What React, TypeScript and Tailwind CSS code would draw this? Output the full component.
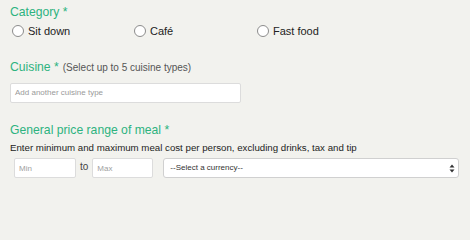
import React from 'react';

const green = 'text-[#2db37f]';

const Radio = ({ label, className }: { label: string; className: string }) => (
  <label className={`flex items-center gap-[4px] ${className}`}>
    <span className="w-[12px] h-[12px] rounded-full border border-[#8c8c8c] bg-white shrink-0" />
    <span className="text-[11px] leading-[12px] text-[#222]">{label}</span>
  </label>
);

export default function App() {
  return (
    <div className="min-h-screen w-full bg-[#f2f2ee]">
      <div className="w-[470px] h-[201px] font-['Liberation_Sans',Arial,sans-serif] px-[10px] pt-[5px] overflow-hidden">
        {/* Category */}
        <div className={`text-[12.2px] leading-[14px] ${green}`}>Category *</div>
        <div className="flex mt-[6px] pl-[2px]">
          <Radio label="Sit down" className="w-[122px]" />
          <Radio label="Café" className="w-[123px]" />
          <Radio label="Fast food" className="w-[120px]" />
        </div>

        {/* Cuisine */}
        <div className="flex items-baseline mt-[23px]">
          <span className={`text-[12.2px] leading-[14px] ${green}`}>Cuisine *</span>
          <span className="ml-[4px] text-[10px] text-[#555]">(Select up to 5 cuisine types)</span>
        </div>
        <div className="mt-[8px] w-[231px] h-[20px] bg-white border border-[#dcdcdc] rounded-[2px] flex items-center px-[4px]">
          <span className="text-[8px] text-[#9a9a9a]">Add another cuisine type</span>
        </div>

        {/* Price range */}
        <div className={`mt-[20px] text-[12.2px] leading-[14px] ${green}`}>General price range of meal *</div>
        <div className="mt-[5px] text-[9.7px] leading-[12px] text-[#222]">
          Enter minimum and maximum meal cost per person, excluding drinks, tax and tip
        </div>
        <div className="flex items-center mt-[4px] pl-[4px]">
          <div className="w-[62px] h-[20px] bg-white border border-[#dcdcdc] rounded-[2px] flex items-center px-[4px] pt-[2px]">
            <span className="text-[8px] text-[#a0a0a0]">Min</span>
          </div>
          <span className="mx-[4px] text-[10px] text-[#444] -mt-[4px]">to</span>
          <div className="w-[61px] h-[20px] bg-white border border-[#dcdcdc] rounded-[2px] flex items-center px-[4px] pt-[2px]">
            <span className="text-[8px] text-[#a0a0a0]">Max</span>
          </div>
          <div className="ml-[10px] w-[296px] h-[20px] bg-white border border-[#d0d0d0] rounded-[3px] flex items-center justify-between pl-[6px] pr-[3px]">
            <span className="text-[8px] text-[#333]">--Select a currency--</span>
            <svg width="6" height="9" viewBox="0 0 6 9">
              <path d="M3 0.5 L5.5 3.5 H0.5 Z" fill="#333" />
              <path d="M3 8.5 L5.5 5.5 H0.5 Z" fill="#333" />
            </svg>
          </div>
        </div>
      </div>
    </div>
  );
}
